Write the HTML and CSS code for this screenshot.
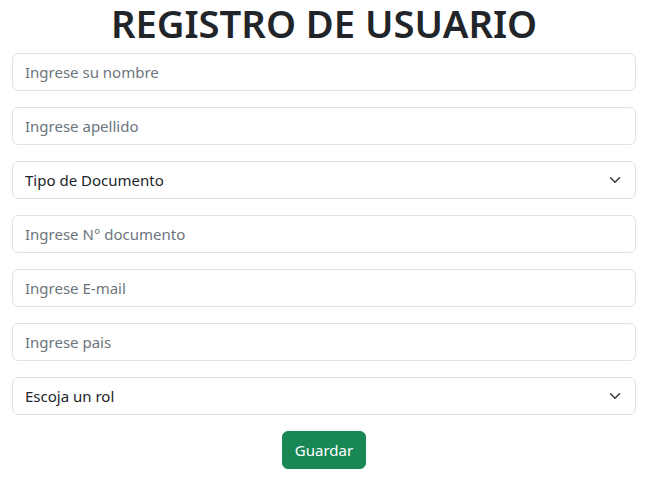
FILE: index.html
```html
<!DOCTYPE html>
<html lang="es">
<head>
<meta charset="utf-8">
<title>Registro de usuario</title>
<link rel="stylesheet" href="styles.css">
</head>
<body>
<main class="container">
  <h1 class="title">REGISTRO DE USUARIO</h1>
  <form class="form">
    <input class="control" type="text" placeholder="Ingrese su nombre">
    <input class="control" type="text" placeholder="Ingrese apellido">
    <select class="control select">
      <option>Tipo de Documento</option>
    </select>
    <input class="control" type="text" placeholder="Ingrese N° documento">
    <input class="control" type="email" placeholder="Ingrese E-mail">
    <input class="control" type="text" placeholder="Ingrese pais">
    <select class="control select">
      <option>Escoja un rol</option>
    </select>
    <div class="actions">
      <button class="btn" type="button">Guardar</button>
    </div>
  </form>
</main>
</body>
</html>
```
FILE: styles.css
```css
* { box-sizing: border-box; }
html, body { margin: 0; padding: 0; background: #fff; }
body {
  font-family: "Noto Sans", "Open Sans", sans-serif;
  color: #212529;
}
.container {
  width: 648px;
  padding: 0 12px;
}
.title {
  margin: 0;
  padding: 0 0 7px;
  text-align: center;
  font-size: 38.2px;
  font-weight: 600;
  line-height: 46px;
  color: #212529;
}
.form {
  display: flex;
  flex-direction: column;
  gap: 16px;
}
.control {
  display: block;
  width: 100%;
  height: 38px;
  padding: 6px 12px;
  font-family: inherit;
  font-size: 15px;
  line-height: 24px;
  color: #212529;
  background: #fff;
  border: 1px solid #dee2e6;
  border-radius: 6px;
  outline: none;
  appearance: none;
  -webkit-appearance: none;
}
.control::placeholder { color: #6c757d; opacity: 1; }
.select {
  padding-right: 36px;
  background-image: url("data:image/svg+xml,%3csvg xmlns='http://www.w3.org/2000/svg' viewBox='0 0 16 16'%3e%3cpath fill='none' stroke='%23343a40' stroke-linecap='round' stroke-linejoin='round' stroke-width='2' d='m2 5 6 6 6-6'/%3e%3c/svg%3e");
  background-repeat: no-repeat;
  background-position: right 12px center;
  background-size: 16px 12px;
}
.actions {
  display: flex;
  justify-content: center;
}
.btn {
  height: 38px;
  padding: 6px 12px;
  font-family: inherit;
  font-size: 15px;
  line-height: 24px;
  color: #fff;
  background: #198754;
  border: 1px solid #198754;
  border-radius: 6px;
}
```
